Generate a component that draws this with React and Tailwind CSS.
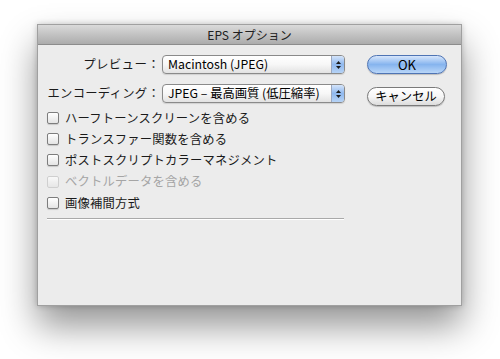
import React from 'react';

const jp = { fontFamily: '"Noto Sans CJK JP", "DejaVu Sans", sans-serif' };

function PopUp({ label }) {
  return (
    <div className="flex h-[19px] w-[183px] items-center rounded-[4px] border border-[#8a8a8a] bg-gradient-to-b from-white via-[#f7f7f7] to-[#e2e2e2] shadow-[0_1px_1px_rgba(0,0,0,0.12)]">
      <span className="flex-1 whitespace-nowrap pl-[5px] text-[12.3px] leading-none text-black">{label}</span>
      <div className="flex h-full w-[13px] flex-col items-center justify-center gap-[2px] rounded-r-[3px] border-l border-[#9aa7c0] bg-gradient-to-b from-[#d4e4fa] via-[#8fb8ee] to-[#b6d3f6]">
        <svg width="5" height="3" viewBox="0 0 5 3"><path d="M2.5 0L5 3H0z" fill="#1a1a1a" /></svg>
        <svg width="5" height="3" viewBox="0 0 5 3"><path d="M0 0h5L2.5 3z" fill="#1a1a1a" /></svg>
      </div>
    </div>
  );
}

function CheckRow({ label, disabled }) {
  return (
    <div className="flex h-[21.3px] items-center">
      <div className={`h-[12px] w-[12px] rounded-[2px] border bg-gradient-to-b from-white to-[#e4e4e4] ${disabled ? 'border-[#c4c4c4] opacity-70' : 'border-[#7d7d7d] shadow-[0_1px_1px_rgba(0,0,0,0.15)]'}`} />
      <span className={`ml-[6px] text-[12.3px] tracking-[0.2px] leading-none ${disabled ? 'text-[#a5a5a5]' : 'text-[#1a1a1a]'}`}>{label}</span>
    </div>
  );
}

export default function App() {
  return (
    <div className="h-[359px] w-[500px] overflow-hidden bg-white pl-[37px] pt-[24px]" style={jp}>
      <div className="flex h-[282px] w-[425px] flex-col border border-[#a0a0a0] shadow-[0_20px_34px_rgba(0,0,0,0.42),0_0_6px_rgba(0,0,0,0.2)]">
        <div className="flex h-[20px] items-center justify-center border-b border-[#8c8c8c] bg-gradient-to-b from-[#dadada] to-[#acacac]">
          <span className="text-[12px] leading-none text-[#202020]">EPS オプション</span>
        </div>
        <div className="flex flex-1 flex-col bg-[#ececec] pl-[9px] pt-[10px]">
          <div className="flex">
            <div className="flex flex-col gap-[10px]">
              <div className="flex items-center">
                <span className="w-[115px] pr-[2px] text-right text-[12.5px] tracking-[0.3px] leading-none text-[#1a1a1a]">プレビュー：</span>
                <PopUp label="Macintosh (JPEG)" />
              </div>
              <div className="flex items-center">
                <span className="w-[115px] pr-[2px] text-right text-[12.3px] leading-none tracking-[0.3px] text-[#1a1a1a]">エンコーディング：</span>
                <PopUp label="JPEG – 最高画質 (低圧縮率)" />
              </div>
            </div>
            <div className="ml-[22px] flex flex-col items-start">
              <button className="flex h-[19px] w-[80px] items-center justify-center rounded-full border border-[#4f74b4] bg-gradient-to-b from-[#d7e6fb] via-[#86b4ee] to-[#b9d6f8] text-[13px] leading-none text-black shadow-[0_1px_1px_rgba(0,0,0,0.2)]">
                OK
              </button>
              <button className="mt-[13px] flex h-[19px] w-[78px] items-center justify-center rounded-full border border-[#7a7a7a] bg-gradient-to-b from-white via-[#f6f6f6] to-[#dcdcdc] text-[12.3px] leading-none text-black shadow-[0_1px_1px_rgba(0,0,0,0.2)]">
                キャンセル
              </button>
            </div>
          </div>
          <div className="mt-[1px] flex flex-col">
            <CheckRow label="ハーフトーンスクリーンを含める" />
            <CheckRow label="トランスファー関数を含める" />
            <CheckRow label="ポストスクリプトカラーマネジメント" />
            <CheckRow label="ベクトルデータを含める" disabled />
            <CheckRow label="画像補間方式" />
          </div>
          <div className="mt-[5px] h-[2px] w-[297px] border-t border-[#a9a9a9] border-b border-b-white" />
        </div>
      </div>
    </div>
  );
}
